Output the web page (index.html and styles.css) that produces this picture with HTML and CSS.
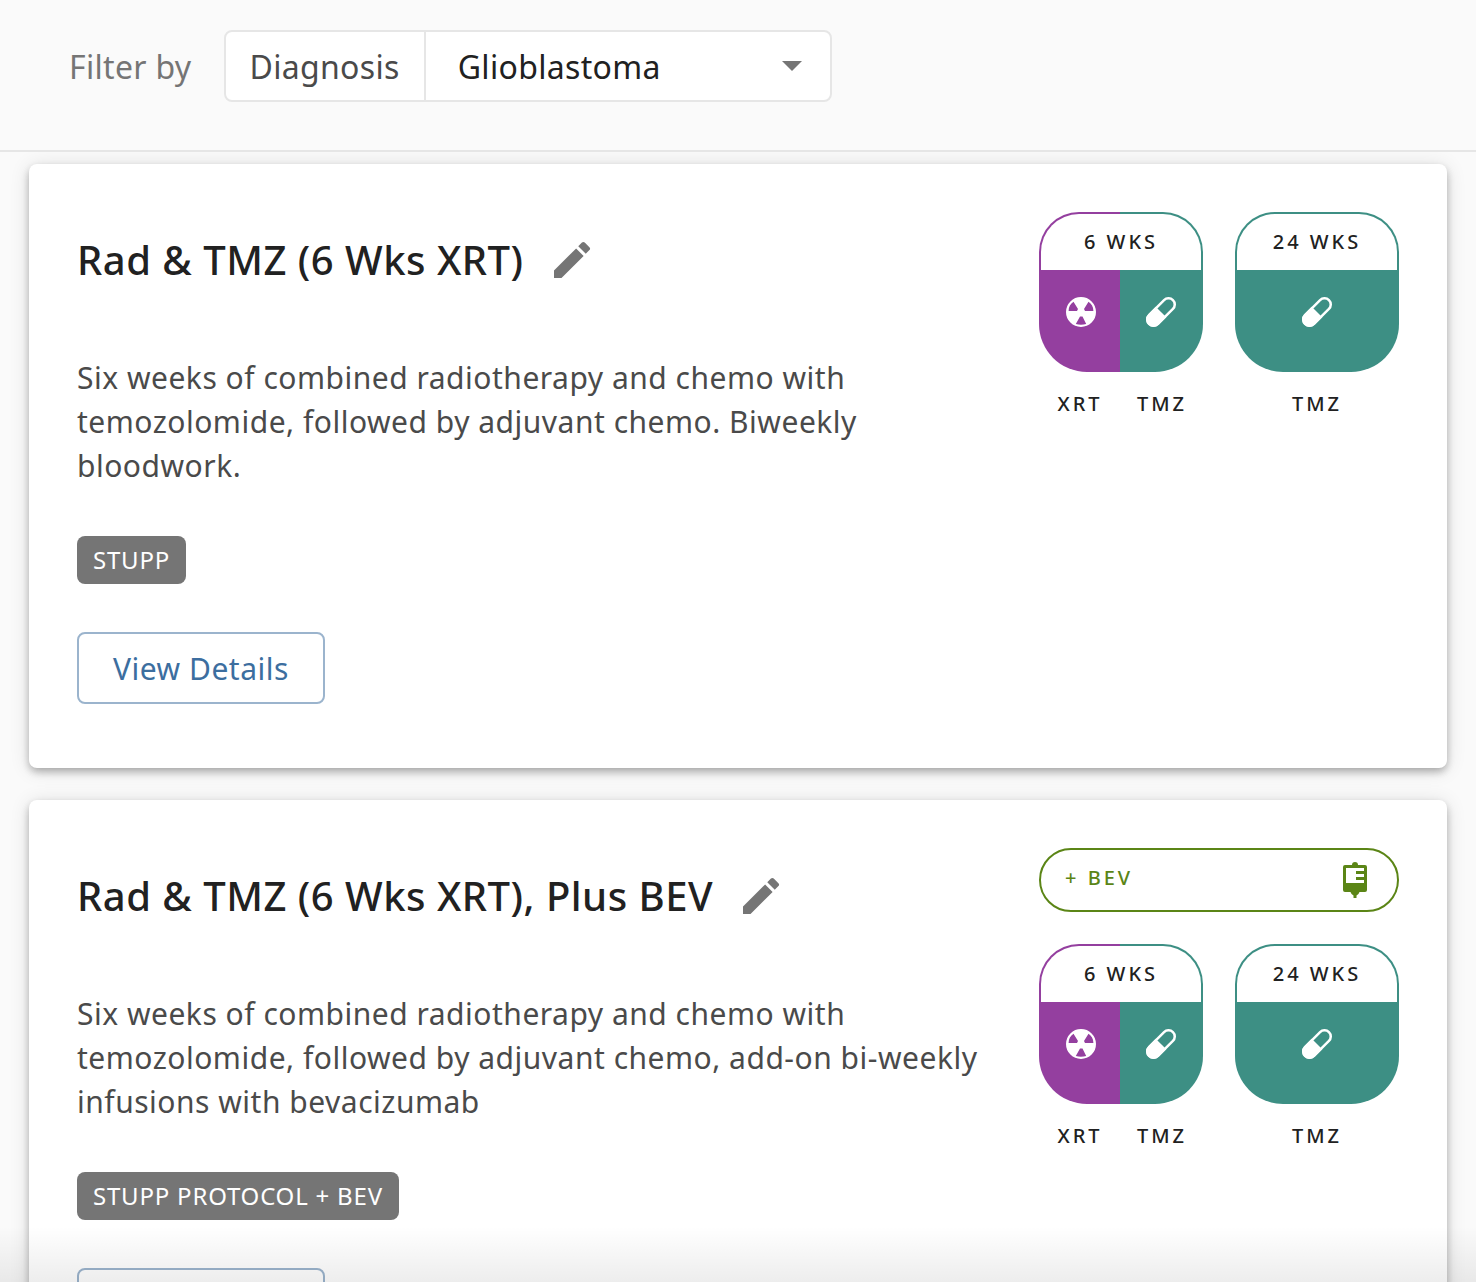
FILE: index.html
```
<!DOCTYPE html>
<html lang="en">
<head>
<meta charset="utf-8">
<meta name="viewport" content="width=device-width, initial-scale=1">
<title>Treatment protocols</title>
<link rel="stylesheet" href="styles.css">
</head>
<body>
<svg class="sprite" aria-hidden="true">
  <symbol id="pencil" viewBox="0 0 24 24">
    <path d="M3 17.25V21h3.75L17.81 9.94l-3.75-3.75L3 17.25zM20.71 7.04a1 1 0 0 0 0-1.41l-2.34-2.34a1 1 0 0 0-1.41 0l-1.83 1.83 3.75 3.75 1.83-1.83z"/>
  </symbol>
  <symbol id="radiation" viewBox="0 0 30 30">
    <path fill-rule="evenodd" d="M15 0a15 15 0 1 0 0 30a15 15 0 1 0 0-30zM7.500 4.800L12 12L11 14H2.600C2.600 10 4.500 6.800 7.500 4.800zM22.500 4.800C25.500 6.800 27.400 10 27.400 14H19L18 12zM14 19.400H16.500L20.200 27C17 28 13 28 9.800 27z"/>
  </symbol>
  <symbol id="pill" viewBox="0 0 30 30">
    <g transform="rotate(-45 15 15)">
      <rect x="-1.860" y="8.750" width="33.720" height="12.500" rx="6.250" fill="none" stroke="currentColor" stroke-width="2.500"/>
      <path d="M15 7.500H4.400a7.500 7.500 0 0 0 0 15H15z"/>
    </g>
  </symbol>
  <symbol id="iv-bag" viewBox="0 0 24 36">
    <path fill-rule="evenodd" d="M9 3a3 3 0 0 1 6 0H22a2 2 0 0 1 2 2V28a2 2 0 0 1-2 2H16.500Q15.500 33 13.500 33.500V36H10.500V33.500Q8.500 33 7.500 30H2a2 2 0 0 1-2-2V5a2 2 0 0 1 2-2zM3 6V21H21V18H13V15H21V12H13V9H21V6z"/>
  </symbol>
</svg>

<div class="app">
  <form class="filter-bar">
    <label class="filter-label" for="diagnosis">Filter by</label>
    <div class="filter-box">
      <span class="filter-kind">Diagnosis</span>
      <select class="filter-select" id="diagnosis">
        <option>Glioblastoma</option>
      </select>
    </div>
  </form>

  <main class="protocols">
    <article class="card">
      <div class="card-body">
        <header class="card-header">
          <h2 class="card-title">Rad &amp; TMZ (6 Wks XRT)</h2>
          <button class="icon-button" type="button" aria-label="Edit"><svg class="icon-pencil"><use href="#pencil"/></svg></button>
        </header>
        <p class="description">Six weeks of combined radiotherapy and chemo with temozolomide, followed by adjuvant chemo. Biweekly bloodwork.</p>
        <span class="tag">STUPP</span>
        <button class="details-button" type="button">View Details</button>
      </div>
      <div class="regimen">
        <div class="phases">
          <div class="phase">
            <div class="phase-box combined">
              <div class="phase-time">6 WKS</div>
              <div class="phase-drugs">
                <svg class="icon-drug"><use href="#radiation"/></svg>
                <svg class="icon-drug"><use href="#pill"/></svg>
              </div>
            </div>
            <div class="phase-names"><span>XRT</span><span>TMZ</span></div>
          </div>
          <div class="phase">
            <div class="phase-box">
              <div class="phase-time">24 WKS</div>
              <div class="phase-drugs">
                <svg class="icon-drug"><use href="#pill"/></svg>
              </div>
            </div>
            <div class="phase-names"><span>TMZ</span></div>
          </div>
        </div>
      </div>
    </article>

    <article class="card">
      <div class="card-body">
        <header class="card-header">
          <h2 class="card-title">Rad &amp; TMZ (6 Wks XRT), Plus BEV</h2>
          <button class="icon-button" type="button" aria-label="Edit"><svg class="icon-pencil"><use href="#pencil"/></svg></button>
        </header>
        <p class="description">Six weeks of combined radiotherapy and chemo with temozolomide, followed by adjuvant chemo, add-on bi-weekly infusions with bevacizumab</p>
        <span class="tag">STUPP PROTOCOL + BEV</span>
        <button class="details-button" type="button">View Details</button>
      </div>
      <div class="regimen">
        <div class="addon"><span>+ BEV</span><svg class="icon-bag"><use href="#iv-bag"/></svg></div>
        <div class="phases">
          <div class="phase">
            <div class="phase-box combined">
              <div class="phase-time">6 WKS</div>
              <div class="phase-drugs">
                <svg class="icon-drug"><use href="#radiation"/></svg>
                <svg class="icon-drug"><use href="#pill"/></svg>
              </div>
            </div>
            <div class="phase-names"><span>XRT</span><span>TMZ</span></div>
          </div>
          <div class="phase">
            <div class="phase-box">
              <div class="phase-time">24 WKS</div>
              <div class="phase-drugs">
                <svg class="icon-drug"><use href="#pill"/></svg>
              </div>
            </div>
            <div class="phase-names"><span>TMZ</span></div>
          </div>
        </div>
      </div>
    </article>
  </main>
</div>
</body>
</html>
```
FILE: styles.css
```
:root {
  --ink: #212121;
  --body: #4a4a4a;
  --muted: #757575;
  --line: #e6e6e6;
  --blue: #3c6e9f;
  --blue-line: #9bb4cd;
  --xrt: #943f9f;
  --tmz: #3d8f84;
  --bev: #5b8516;
}

* {
  box-sizing: border-box;
}

body {
  margin: 0;
  background: #fafafa;
  color: var(--ink);
  font-family: "Noto Sans", sans-serif;
}

.sprite {
  position: absolute;
  width: 0;
  height: 0;
}

svg {
  display: block;
  fill: currentColor;
}

.app {
  position: relative;
  display: flex;
  flex-direction: column;
  height: 100vh;
  overflow: hidden;
}

/* Fade that hints at more content below the fold */
.app::after {
  content: "";
  position: absolute;
  inset: auto 0 0;
  height: 56px;
  background: linear-gradient(rgba(0, 0, 0, 0), rgba(0, 0, 0, 0.07));
  pointer-events: none;
}

.filter-bar {
  display: flex;
  flex: none;
  align-items: center;
  gap: 32px;
  padding: 30px 69px 48px;
  border-bottom: 2px solid var(--line);
  font-size: 32px;
  letter-spacing: 0.01em;
}

.filter-label {
  color: var(--muted);
}

.filter-box {
  display: flex;
  width: 608px;
  height: 72px;
  border: 2px solid var(--line);
  border-radius: 8px;
  background: #fff;
}

.filter-kind {
  display: flex;
  align-items: center;
  padding: 0 24px;
  border-right: 2px solid var(--line);
  color: var(--body);
}

.filter-select {
  flex: 1;
  padding: 0 32px;
  border: 0;
  border-radius: 8px;
  appearance: none;
  background: url("data:image/svg+xml,%3Csvg xmlns='http://www.w3.org/2000/svg' viewBox='0 0 20 10'%3E%3Cpath fill='%23757575' d='M0 0h20L10 10z'/%3E%3C/svg%3E") right 28px center / 20px 10px no-repeat;
  color: var(--ink);
  font: inherit;
  letter-spacing: inherit;
}

.protocols {
  display: flex;
  flex: 1;
  flex-direction: column;
  gap: 32px;
  min-height: 0;
  padding: 12px 29px 32px;
  overflow-y: auto;
  scrollbar-width: none;
}

.card {
  display: flex;
  flex: none;
  gap: 32px;
  padding: 48px 48px 64px;
  border-radius: 8px;
  background: #fff;
  box-shadow: 0 4px 8px -2px rgba(0, 0, 0, 0.2), 0 4px 8px rgba(0, 0, 0, 0.14), 0 2px 20px rgba(0, 0, 0, 0.12);
}

.card-body {
  display: flex;
  flex: 1;
  flex-direction: column;
  align-items: flex-start;
  gap: 48px;
}

.card-header {
  display: flex;
  align-items: center;
}

.card-title {
  margin: 0;
  font-size: 40px;
  font-weight: 500;
  letter-spacing: 0.0125em;
  line-height: 48px;
}

.icon-button {
  display: grid;
  place-items: center;
  width: 96px;
  height: 96px;
  padding: 0;
  border: 0;
  background: none;
  color: var(--muted);
}

.icon-pencil {
  width: 48px;
  height: 48px;
}

.description {
  margin: 0;
  color: var(--body);
  font-size: 30px;
  letter-spacing: 0.017em;
  line-height: 44px;
}

.tag {
  padding: 0 16px;
  border-radius: 8px;
  background: var(--muted);
  color: #fff;
  font-size: 24px;
  letter-spacing: 0.033em;
  line-height: 48px;
}

.details-button {
  height: 72px;
  padding: 0 34px;
  border: 2px solid var(--blue-line);
  border-radius: 8px;
  background: none;
  color: var(--blue);
  font: inherit;
  font-size: 30px;
  letter-spacing: 0.017em;
}

.regimen {
  display: flex;
  flex: none;
  flex-direction: column;
  gap: 32px;
  width: 360px;
  font-size: 20px;
  font-weight: 500;
  letter-spacing: 3px;
}

.addon {
  display: flex;
  justify-content: space-between;
  height: 64px;
  padding: 0 30px 0 24px;
  border: 2px solid var(--bev);
  border-radius: 32px;
  color: var(--bev);
  line-height: 56px;
}

.icon-bag {
  align-self: center;
  width: 24px;
  height: 36px;
}

.phases {
  display: flex;
  gap: 32px;
}

.phase {
  flex: 1;
}

.phase-box {
  height: 160px;
  padding: 2px;
  border-radius: 40px 40px 48px 48px;
  background: var(--tmz);
}

.phase-box.combined {
  background: linear-gradient(90deg, var(--xrt) 81px, var(--tmz) 81px);
}

.phase-time {
  border-radius: 38px 38px 0 0;
  background: #fff;
  line-height: 56px;
  text-align: center;
}

.phase-drugs {
  display: flex;
  align-items: center;
  justify-content: space-around;
  height: 84px;
  color: #fff;
}

.icon-drug {
  width: 30px;
  height: 30px;
  overflow: visible;
}

.phase-names {
  display: flex;
  padding-top: 16px;
  line-height: 32px;
  text-align: center;
}

.phase-names span {
  flex: 1;
}
```
